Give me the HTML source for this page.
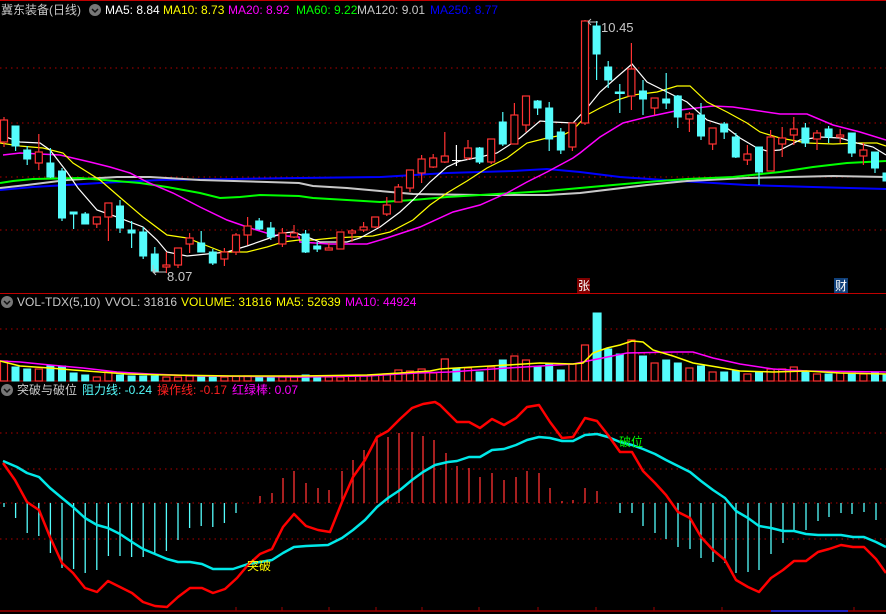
<!DOCTYPE html>
<html><head><meta charset="utf-8"><style>
html,body{margin:0;padding:0;background:#000;width:886px;height:614px;overflow:hidden}
.t{position:absolute;font-family:"Liberation Sans","Noto Sans CJK SC",sans-serif;font-size:12px;line-height:14px;white-space:nowrap}
svg{position:absolute;left:0;top:0}
.cr{fill:#000;stroke:#ff3232;stroke-width:1.2}
.cc{fill:#54fcfc;stroke:#54fcfc;stroke-width:1}
.wr{stroke:#ff3232;stroke-width:1.2}
.wc{stroke:#54fcfc;stroke-width:1.2}
.g{stroke:#b00000;stroke-width:1;stroke-dasharray:1.5 4}
</style></head><body>
<svg width="886" height="614" viewBox="0 0 886 614">
<line x1="0" y1="0.5" x2="886" y2="0.5" stroke="#c00000"/>
<g class="g"><line x1="0" y1="68" x2="886" y2="68"/><line x1="0" y1="123" x2="886" y2="123"/><line x1="0" y1="177" x2="886" y2="177"/><line x1="0" y1="230" x2="886" y2="230"/>
<line x1="0" y1="329" x2="886" y2="329"/><line x1="0" y1="354" x2="886" y2="354"/>
<line x1="0" y1="433" x2="886" y2="433"/><line x1="0" y1="469" x2="886" y2="469"/><line x1="0" y1="503" x2="886" y2="503"/><line x1="0" y1="539" x2="886" y2="539"/></g>
<line x1="0" y1="293.5" x2="886" y2="293.5" stroke="#c00000"/>
<line x1="0" y1="381" x2="886" y2="381" stroke="#c00000"/>
<line x1="0" y1="611" x2="886" y2="611" stroke="#a00000" stroke-width="1.5"/>
<line x1="771" y1="611" x2="848" y2="611" stroke="#2020c0" stroke-width="2"/>
<g stroke="#a00000"><line x1="236" y1="607" x2="236" y2="611"/><line x1="282" y1="607" x2="282" y2="611"/><line x1="329" y1="607" x2="329" y2="611"/><line x1="376" y1="607" x2="376" y2="611"/><line x1="422" y1="607" x2="422" y2="611"/><line x1="479" y1="607" x2="479" y2="611"/><line x1="538" y1="607" x2="538" y2="611"/><line x1="596" y1="607" x2="596" y2="611"/><line x1="654" y1="607" x2="654" y2="611"/><line x1="722" y1="607" x2="722" y2="611"/><line x1="854" y1="607" x2="854" y2="611"/></g>

<g fill="none" stroke-width="1.2">
<polyline stroke="#0000ff" stroke-width="2" points="0,190 33,187 67,185 100,183 160,180 233,179 299,178 380,177 447,173 513,171 547,169 580,172 620,177 680,181 747,185 813,187 886,189"/>
<polyline stroke="#c8c8c8" stroke-width="2" points="0,188 27,185 67,180 117,177 150,177 200,180 267,182 299,183 313,186 347,188 380,191 413,194 480,195 547,195 580,193 647,185 687,181 747,178 833,176 886,177"/>
<polyline stroke="#00ff00" stroke-width="2" points="0,183 13,181 33,179 80,178 140,183 167,187 200,193 220,198 240,197 260,195 299,196 313,198 347,200 380,202 413,200 447,197 497,194 547,191 580,188 613,185 647,182 687,179 733,177 780,172 813,167 847,163 886,161"/>
<polyline stroke="#ff00ff" stroke-width="1.5" points="3,155 20,153 60,155 90,162 110,167 130,173 147,182 173,193 200,207 227,220 250,228 273,235 299,237 300,242 330,244 367,244 387,238 420,227 453,212 480,205 507,193 527,182 547,172 573,158 580,153 600,137 623,123 647,117 680,110 713,106 733,107 753,110 780,114 807,114 833,125 860,132 886,140"/>
<polyline stroke="#ffff00" points="0,143 20,146 43,148 63,153 73,163 100,180 123,200 143,217 167,235 187,238 210,247 223,252 247,252 267,247 283,242 299,240 313,240 333,238 373,236 390,232 413,220 430,205 447,193 467,181 487,168 507,158 527,143 547,138 563,135 573,130 587,115 600,108 617,100 633,95 657,92 677,86 690,86 707,102 727,112 747,123 760,132 780,138 807,143 833,144 860,143 877,143 886,146"/>
<polyline stroke="#ffffff" points="0,135 20,142 40,143 50,150 67,172 78,188 97,210 117,217 143,227 157,240 167,252 187,256 207,254 227,252 247,246 267,239 283,233 293,232 307,237 320,242 347,242 360,238 380,227 400,212 413,200 430,182 447,167 460,161 480,157 497,153 520,138 540,121 553,122 573,123 587,108 600,92 617,77 632,64 647,82 667,92 687,102 707,120 723,125 740,138 757,148 767,151 780,150 800,140 820,137 840,138 857,143 873,147 886,155"/>
</g>

<g>
<line class="wr" x1="4" y1="117" x2="4" y2="147"/><rect class="cr" x="0.5" y="120" width="7" height="22"/>
<line class="wc" x1="15.6" y1="126" x2="15.6" y2="151"/><rect class="cc" x="12" y="126" width="7" height="20"/>
<line class="wc" x1="27.2" y1="146" x2="27.2" y2="165"/><rect class="cc" x="23.7" y="150" width="7" height="9"/>
<line class="wr" x1="38.8" y1="134" x2="38.8" y2="170"/><rect class="cr" x="35.3" y="152" width="7" height="11"/>
<line class="wc" x1="50.4" y1="148" x2="50.4" y2="178"/><rect class="cc" x="46.9" y="163" width="7" height="14"/>
<line class="wc" x1="62" y1="168" x2="62" y2="221"/><rect class="cc" x="58.5" y="171" width="7" height="47"/>
<line class="wc" x1="73.6" y1="212" x2="73.6" y2="229"/><rect class="cc" x="70.1" y="212" width="7" height="2"/>
<line class="wc" x1="85.2" y1="212" x2="85.2" y2="224"/><rect class="cc" x="81.7" y="214" width="7" height="10"/>
<line class="wr" x1="96.8" y1="217" x2="96.8" y2="228"/><rect class="cr" x="93.3" y="217" width="7" height="7"/>
<line class="wr" x1="108.4" y1="203" x2="108.4" y2="241"/><rect class="cr" x="104.9" y="203" width="7" height="14"/>
<line class="wc" x1="120" y1="200" x2="120" y2="233"/><rect class="cc" x="116.5" y="206" width="7" height="22"/>
<line class="wc" x1="131.6" y1="221" x2="131.6" y2="248"/><rect class="cc" x="128.1" y="230" width="7" height="3"/>
<line class="wc" x1="143.2" y1="227" x2="143.2" y2="259"/><rect class="cc" x="139.7" y="232" width="7" height="24"/>
<line class="wc" x1="154.8" y1="247" x2="154.8" y2="273"/><rect class="cc" x="151.3" y="254" width="7" height="17"/>
<line class="wr" x1="166.4" y1="252" x2="166.4" y2="273"/><rect class="cr" x="162.9" y="265" width="7" height="2"/>
<line class="wr" x1="178" y1="248" x2="178" y2="268"/><rect class="cr" x="174.5" y="248" width="7" height="17"/>
<line class="wr" x1="189.6" y1="233" x2="189.6" y2="253"/><rect class="cr" x="186.1" y="238" width="7" height="6"/>
<line class="wc" x1="201.2" y1="231" x2="201.2" y2="252"/><rect class="cc" x="197.7" y="243" width="7" height="9"/>
<line class="wc" x1="212.8" y1="249" x2="212.8" y2="265"/><rect class="cc" x="209.3" y="252" width="7" height="11"/>
<line class="wr" x1="224.4" y1="248" x2="224.4" y2="266"/><rect class="cr" x="220.9" y="252" width="7" height="7"/>
<line class="wr" x1="236" y1="233" x2="236" y2="255"/><rect class="cr" x="232.5" y="235" width="7" height="17"/>
<line class="wr" x1="247.6" y1="217" x2="247.6" y2="245"/><rect class="cr" x="244.1" y="226" width="7" height="9"/>
<line class="wc" x1="259.2" y1="218" x2="259.2" y2="230"/><rect class="cc" x="255.7" y="221" width="7" height="8"/>
<line class="wc" x1="270.8" y1="222" x2="270.8" y2="240"/><rect class="cc" x="267.3" y="228" width="7" height="9"/>
<line class="wr" x1="282.4" y1="228" x2="282.4" y2="247"/><rect class="cr" x="278.9" y="233" width="7" height="11"/>
<line class="wr" x1="294" y1="225" x2="294" y2="238"/><rect class="cr" x="290.5" y="233" width="7" height="4"/>
<line class="wc" x1="305.6" y1="230" x2="305.6" y2="253"/><rect class="cc" x="302.1" y="234" width="7" height="18"/>
<line class="wc" x1="317.2" y1="242" x2="317.2" y2="252"/><rect class="cc" x="313.7" y="246" width="7" height="3"/>
<line class="wr" x1="328.8" y1="243" x2="328.8" y2="250"/><rect class="cr" x="325.3" y="248" width="7" height="2"/>
<line class="wr" x1="340.4" y1="232" x2="340.4" y2="249"/><rect class="cr" x="336.9" y="232" width="7" height="17"/>
<line class="wr" x1="352" y1="229" x2="352" y2="242"/><rect class="cr" x="348.5" y="231" width="7" height="2"/>
<line class="wr" x1="363.6" y1="222" x2="363.6" y2="232"/><rect class="cr" x="360.1" y="227" width="7" height="3"/>
<line class="wr" x1="375.2" y1="217" x2="375.2" y2="228"/><rect class="cr" x="371.7" y="217" width="7" height="10"/>
<line class="wr" x1="386.8" y1="197" x2="386.8" y2="216"/><rect class="cr" x="383.3" y="205" width="7" height="9"/>
<line class="wr" x1="398.4" y1="184" x2="398.4" y2="202"/><rect class="cr" x="394.9" y="187" width="7" height="15"/>
<line class="wr" x1="410" y1="170" x2="410" y2="192"/><rect class="cr" x="406.5" y="170" width="7" height="18"/>
<line class="wr" x1="421.6" y1="155" x2="421.6" y2="183"/><rect class="cr" x="418.1" y="159" width="7" height="14"/>
<line class="wr" x1="433.2" y1="154" x2="433.2" y2="168"/><rect class="cr" x="429.7" y="158" width="7" height="9"/>
<line class="wr" x1="444.8" y1="132" x2="444.8" y2="163"/><rect class="cr" x="441.3" y="156" width="7" height="6"/>
<line stroke="#fff" stroke-width="1.2" x1="456.4" y1="145" x2="456.4" y2="166"/><line stroke="#fff" x1="452" y1="160.5" x2="461" y2="160.5"/>
<line class="wr" x1="468" y1="140" x2="468" y2="160"/><rect class="cr" x="464.5" y="148" width="7" height="10"/>
<line class="wc" x1="479.6" y1="147" x2="479.6" y2="164"/><rect class="cc" x="476.1" y="148" width="7" height="14"/>
<line class="wr" x1="491.2" y1="139" x2="491.2" y2="164"/><rect class="cr" x="487.7" y="139" width="7" height="23"/>
<line class="wc" x1="502.8" y1="112" x2="502.8" y2="146"/><rect class="cc" x="499.3" y="122" width="7" height="22"/>
<line class="wr" x1="514.4" y1="103" x2="514.4" y2="144"/><rect class="cr" x="510.9" y="115" width="7" height="29"/>
<line class="wr" x1="526" y1="96" x2="526" y2="132"/><rect class="cr" x="522.5" y="96" width="7" height="29"/>
<line class="wc" x1="537.6" y1="100" x2="537.6" y2="115"/><rect class="cc" x="534.1" y="101" width="7" height="7"/>
<line class="wc" x1="549.2" y1="102" x2="549.2" y2="151"/><rect class="cc" x="545.7" y="108" width="7" height="31"/>
<line class="wc" x1="560.8" y1="128" x2="560.8" y2="154"/><rect class="cc" x="557.3" y="132" width="7" height="18"/>
<line class="wr" x1="572.4" y1="123" x2="572.4" y2="151"/><rect class="cr" x="568.9" y="123" width="7" height="24"/>
<line class="wr" x1="585" y1="20" x2="585" y2="125"/><rect class="cr" x="581.5" y="21" width="7" height="102"/>
<line class="wc" x1="596.6" y1="21" x2="596.6" y2="80"/><rect class="cc" x="593.1" y="26" width="7" height="28"/>
<line class="wc" x1="608.2" y1="61" x2="608.2" y2="88"/><rect class="cc" x="604.7" y="67" width="7" height="13"/>
<line class="wc" x1="619.8" y1="84" x2="619.8" y2="113"/><rect class="cc" x="615.3" y="92" width="9" height="1.5"/>
<line class="wr" x1="631.4" y1="43" x2="631.4" y2="110"/><rect class="cr" x="627.9" y="69" width="7" height="27"/>
<line class="wc" x1="643" y1="80" x2="643" y2="115"/><rect class="cc" x="639.5" y="91" width="7" height="8"/>
<line class="wr" x1="654.6" y1="98" x2="654.6" y2="115"/><rect class="cr" x="651.1" y="98" width="7" height="10"/>
<line class="wc" x1="666.2" y1="73" x2="666.2" y2="109"/><rect class="cc" x="662.7" y="99" width="7" height="4"/>
<line class="wc" x1="677.8" y1="95" x2="677.8" y2="128"/><rect class="cc" x="674.3" y="96" width="7" height="21"/>
<line class="wr" x1="689.4" y1="112" x2="689.4" y2="132"/><rect class="cr" x="685.9" y="114" width="7" height="5"/>
<line class="wc" x1="701" y1="103" x2="701" y2="140"/><rect class="cc" x="697.5" y="115" width="7" height="21"/>
<line class="wr" x1="712.6" y1="128" x2="712.6" y2="150"/><rect class="cr" x="709.1" y="128" width="7" height="16"/>
<line class="wc" x1="724.2" y1="122" x2="724.2" y2="139"/><rect class="cc" x="720.7" y="124" width="7" height="8"/>
<line class="wc" x1="735.8" y1="133" x2="735.8" y2="158"/><rect class="cc" x="732.3" y="137" width="7" height="20"/>
<line class="wr" x1="747.4" y1="145" x2="747.4" y2="165"/><rect class="cr" x="743.9" y="154" width="7" height="6"/>
<line class="wc" x1="759" y1="147" x2="759" y2="185"/><rect class="cc" x="755.5" y="147" width="7" height="25"/>
<line class="wr" x1="770.6" y1="130" x2="770.6" y2="171"/><rect class="cr" x="767.1" y="137" width="7" height="34"/>
<line class="wr" x1="782.2" y1="127" x2="782.2" y2="157"/><rect class="cr" x="778.7" y="138" width="7" height="6"/>
<line class="wr" x1="793.8" y1="117" x2="793.8" y2="145"/><rect class="cr" x="790.3" y="129" width="7" height="6"/>
<line class="wc" x1="805.4" y1="123" x2="805.4" y2="147"/><rect class="cc" x="801.9" y="128" width="7" height="15"/>
<line class="wr" x1="817" y1="130" x2="817" y2="150"/><rect class="cr" x="813.5" y="133" width="7" height="6"/>
<line class="wc" x1="828.6" y1="126" x2="828.6" y2="143"/><rect class="cc" x="825.1" y="129" width="7" height="8"/>
<line class="wr" x1="840.2" y1="129" x2="840.2" y2="143"/><rect class="cr" x="836.7" y="135" width="7" height="2"/>
<line class="wc" x1="851.8" y1="133" x2="851.8" y2="157"/><rect class="cc" x="848.3" y="133" width="7" height="20"/>
<line class="wr" x1="863.4" y1="143" x2="863.4" y2="165"/><rect class="cr" x="859.9" y="150" width="7" height="6"/>
<line class="wc" x1="875" y1="152" x2="875" y2="173"/><rect class="cc" x="871.5" y="152" width="7" height="16"/>
<rect class="cc" x="883" y="173" width="7" height="8"/>
</g>
<g stroke="#c0c0c0" fill="none"><path d="M588,22 L598,22 M588,22 L591,19 M588,22 L591,25"/><path d="M153,265 L153,272 L166,272 M153,272 L156,269 M153,272 L156,275"/></g>
<text x="601" y="32" fill="#c8c8c8" font-family="Liberation Sans" font-size="13">10.45</text>
<text x="167" y="281" fill="#c8c8c8" font-family="Liberation Sans" font-size="13">8.07</text>
<rect x="577" y="278" width="13" height="15" fill="#800000"/>
<text x="578" y="290" fill="#ffffff" font-family="Noto Sans CJK SC" font-size="12">张</text>
<rect x="834" y="278" width="14" height="15" fill="#10407a"/>
<text x="835" y="290" fill="#ffffff" font-family="Noto Sans CJK SC" font-size="12">财</text>

<g>
<rect class="cr" x="0.5" y="361" width="7" height="20"/><rect class="cc" x="12" y="367" width="7" height="14"/><rect class="cc" x="23.7" y="369" width="7" height="12"/><rect class="cr" x="35.3" y="369" width="7" height="12"/><rect class="cc" x="46.9" y="366" width="7" height="15"/><rect class="cc" x="58.5" y="366" width="7" height="15"/><rect class="cc" x="70.1" y="373" width="7" height="8"/><rect class="cc" x="81.7" y="375" width="7" height="6"/><rect class="cr" x="93.3" y="377" width="7" height="4"/><rect class="cr" x="104.9" y="372" width="7" height="9"/><rect class="cc" x="116.5" y="375" width="7" height="6"/><rect class="cc" x="128.1" y="376" width="7" height="5"/><rect class="cc" x="139.7" y="376" width="7" height="5"/><rect class="cc" x="151.3" y="376" width="7" height="5"/><rect class="cr" x="162.9" y="377" width="7" height="4"/><rect class="cr" x="174.5" y="377" width="7" height="4"/><rect class="cr" x="186.1" y="376" width="7" height="5"/><rect class="cc" x="197.7" y="377" width="7" height="4"/><rect class="cc" x="209.3" y="377" width="7" height="4"/><rect class="cr" x="220.9" y="377" width="7" height="4"/><rect class="cr" x="232.5" y="376" width="7" height="5"/><rect class="cr" x="244.1" y="376" width="7" height="5"/><rect class="cc" x="255.7" y="377" width="7" height="4"/><rect class="cc" x="267.3" y="377" width="7" height="4"/><rect class="cr" x="278.9" y="377" width="7" height="4"/><rect class="cr" x="290.5" y="377" width="7" height="4"/><rect class="cc" x="302.1" y="375" width="7" height="6"/><rect class="cc" x="313.7" y="377" width="7" height="4"/><rect class="cr" x="325.3" y="377" width="7" height="4"/><rect class="cr" x="336.9" y="377" width="7" height="4"/><rect class="cr" x="348.5" y="376" width="7" height="5"/><rect class="cr" x="360.1" y="376" width="7" height="5"/><rect class="cr" x="371.7" y="375" width="7" height="6"/><rect class="cr" x="383.3" y="374" width="7" height="7"/><rect class="cr" x="394.9" y="370" width="7" height="11"/><rect class="cr" x="406.5" y="371" width="7" height="10"/><rect class="cr" x="418.1" y="369" width="7" height="12"/><rect class="cr" x="429.7" y="373" width="7" height="8"/><rect class="cr" x="441.3" y="359" width="7" height="22"/><rect class="cc" x="452.9" y="368" width="7" height="13"/><rect class="cr" x="464.5" y="368" width="7" height="13"/><rect class="cc" x="476.1" y="372" width="7" height="9"/><rect class="cr" x="487.7" y="367" width="7" height="14"/><rect class="cc" x="499.3" y="360" width="7" height="21"/><rect class="cr" x="510.9" y="356" width="7" height="25"/><rect class="cr" x="522.5" y="360" width="7" height="21"/><rect class="cc" x="534.1" y="367" width="7" height="14"/><rect class="cc" x="545.7" y="364" width="7" height="17"/><rect class="cc" x="557.3" y="370" width="7" height="11"/><rect class="cr" x="568.9" y="364" width="7" height="17"/><rect class="cr" x="581.5" y="345" width="7" height="36"/><rect class="cc" x="593.1" y="313" width="8" height="68"/><rect class="cc" x="604.7" y="349" width="7" height="32"/><rect class="cc" x="616.3" y="354" width="7" height="27"/><rect class="cr" x="627.9" y="340" width="7" height="41"/><rect class="cc" x="639.5" y="356" width="7" height="25"/><rect class="cr" x="651.1" y="363" width="7" height="18"/><rect class="cc" x="662.7" y="360" width="7" height="21"/><rect class="cc" x="674.3" y="363" width="7" height="18"/><rect class="cr" x="685.9" y="368" width="7" height="13"/><rect class="cc" x="697.5" y="366" width="7" height="15"/><rect class="cr" x="709.1" y="372" width="7" height="9"/><rect class="cc" x="720.7" y="372" width="7" height="9"/><rect class="cc" x="732.3" y="371" width="7" height="10"/><rect class="cr" x="743.9" y="374" width="7" height="7"/><rect class="cc" x="755.5" y="372" width="7" height="9"/><rect class="cr" x="767.1" y="369" width="7" height="12"/><rect class="cr" x="778.7" y="369" width="7" height="12"/><rect class="cr" x="790.3" y="367" width="7" height="14"/><rect class="cc" x="801.9" y="372" width="7" height="9"/><rect class="cr" x="813.5" y="374" width="7" height="7"/><rect class="cc" x="825.1" y="374" width="7" height="7"/><rect class="cr" x="836.7" y="373" width="7" height="8"/><rect class="cc" x="848.3" y="373" width="7" height="8"/><rect class="cr" x="859.9" y="374" width="7" height="7"/><rect class="cc" x="871.5" y="373" width="7" height="8"/><rect class="cc" x="883" y="374" width="7" height="7"/>
</g>
<g fill="none" stroke-width="1.5">
<polyline stroke="#ff00ff" points="0,361 20,362 50,365 83,368 117,372 150,374 200,376 300,377 367,376 417,373 450,372 507,368 573,364 627,353 673,352 693,352 713,358 740,364 773,369 807,371 886,372"/>
<polyline stroke="#ffff00" points="0,361 20,366 50,368 73,370 100,372 127,374 167,375 233,376 300,376 367,375 400,373 430,371 440,369 473,367 507,365 540,363 573,364 583,363 593,353 607,348 620,345 632,341 643,342 653,350 673,356 693,363 717,367 740,371 773,372 807,371 840,373 886,374"/>
</g>

<g stroke="#54fcfc" stroke-width="1.3">
<line x1="4" y1="503" x2="4" y2="507"/><line x1="15.6" y1="503" x2="15.6" y2="518"/><line x1="27.2" y1="503" x2="27.2" y2="533"/><line x1="38.8" y1="503" x2="38.8" y2="536"/><line x1="50.4" y1="503" x2="50.4" y2="553"/><line x1="62" y1="503" x2="62" y2="568"/><line x1="73.6" y1="503" x2="73.6" y2="569"/><line x1="85.2" y1="503" x2="85.2" y2="573"/><line x1="96.8" y1="503" x2="96.8" y2="570"/><line x1="108.4" y1="503" x2="108.4" y2="556"/><line x1="120" y1="503" x2="120" y2="556"/><line x1="131.6" y1="503" x2="131.6" y2="557"/><line x1="143.2" y1="503" x2="143.2" y2="557"/><line x1="154.8" y1="503" x2="154.8" y2="553"/><line x1="166.4" y1="503" x2="166.4" y2="551"/><line x1="178" y1="503" x2="178" y2="540"/><line x1="189.6" y1="503" x2="189.6" y2="528"/><line x1="201.2" y1="503" x2="201.2" y2="526"/><line x1="212.8" y1="503" x2="212.8" y2="527"/><line x1="224.4" y1="503" x2="224.4" y2="523"/><line x1="236" y1="503" x2="236" y2="513"/>
<line x1="620" y1="503" x2="620" y2="513"/><line x1="632" y1="503" x2="632" y2="513"/><line x1="643" y1="503" x2="643" y2="526"/><line x1="655" y1="503" x2="655" y2="533"/><line x1="666" y1="503" x2="666" y2="539"/><line x1="678" y1="503" x2="678" y2="547"/><line x1="690" y1="503" x2="690" y2="549"/><line x1="701" y1="503" x2="701" y2="558"/><line x1="713" y1="503" x2="713" y2="562"/><line x1="725" y1="503" x2="725" y2="563"/><line x1="736" y1="503" x2="736" y2="573"/><line x1="748" y1="503" x2="748" y2="572"/><line x1="759" y1="503" x2="759" y2="570"/><line x1="771" y1="503" x2="771" y2="554"/><line x1="783" y1="503" x2="783" y2="543"/><line x1="794" y1="503" x2="794" y2="530"/><line x1="806" y1="503" x2="806" y2="530"/><line x1="818" y1="503" x2="818" y2="521"/><line x1="829" y1="503" x2="829" y2="517"/><line x1="841" y1="503" x2="841" y2="513"/><line x1="852" y1="503" x2="852" y2="514"/><line x1="864" y1="503" x2="864" y2="512"/><line x1="876" y1="503" x2="876" y2="520"/>
</g>
<g stroke="#ff3232" stroke-width="1.3">
<line x1="260" y1="503" x2="260" y2="496"/><line x1="272" y1="503" x2="272" y2="493"/><line x1="283" y1="503" x2="283" y2="478"/><line x1="294" y1="503" x2="294" y2="471"/><line x1="306" y1="503" x2="306" y2="483"/><line x1="318" y1="503" x2="318" y2="488"/><line x1="329" y1="503" x2="329" y2="490"/><line x1="342" y1="503" x2="342" y2="471"/><line x1="353" y1="503" x2="353" y2="460"/><line x1="364" y1="503" x2="364" y2="450"/><line x1="377" y1="503" x2="377" y2="437"/><line x1="388" y1="503" x2="388" y2="437"/><line x1="399" y1="503" x2="399" y2="433"/><line x1="412" y1="503" x2="412" y2="432"/><line x1="423" y1="503" x2="423" y2="436"/><line x1="434" y1="503" x2="434" y2="440"/><line x1="446" y1="503" x2="446" y2="453"/><line x1="457" y1="503" x2="457" y2="466"/><line x1="469" y1="503" x2="469" y2="468"/><line x1="480" y1="503" x2="480" y2="477"/><line x1="492" y1="503" x2="492" y2="473"/><line x1="504" y1="503" x2="504" y2="480"/><line x1="516" y1="503" x2="516" y2="477"/><line x1="527" y1="503" x2="527" y2="471"/><line x1="539" y1="503" x2="539" y2="473"/><line x1="550" y1="503" x2="550" y2="488"/><line x1="562" y1="503" x2="562" y2="501"/><line x1="573" y1="503" x2="573" y2="500"/><line x1="585" y1="503" x2="585" y2="488"/><line x1="597" y1="503" x2="597" y2="491"/>
</g>
<g fill="none" stroke-width="2.5" stroke-linejoin="round">
<polyline stroke="#00e8e8" points="3,461 17,467 27,473 39,477 50,488 62,498 73,507 85,518 97,525 108,528 120,534 132,542 143,549 155,554 167,559 178,562 190,562 202,564 213,569 233,569 248,564 260,562 272,560 283,553 294,547 306,546 328,545 342,538 353,530 365,520 377,507 388,498 400,490 412,480 423,472 435,465 448,462 457,461 469,457 480,457 492,450 504,449 516,445 527,440 539,437 550,438 562,441 573,441 585,435 597,434 608,437 620,442 632,445 643,449 655,454 666,460 678,466 690,472 701,481 713,490 725,498 736,511 748,518 759,526 771,528 783,531 794,531 806,534 818,535 841,535 853,537 864,537 876,542 886,547"/>
<polyline stroke="#ff0000" points="3,463 15,480 27,502 39,510 50,537 62,563 73,573 85,588 97,592 108,581 120,587 132,593 143,602 155,606 167,607 178,597 190,588 202,588 213,593 225,589 237,578 248,565 260,554 272,549 283,527 294,514 306,526 318,530 330,532 342,502 353,477 365,460 377,437 388,431 400,419 412,408 423,404 435,402 440,405 457,422 469,422 480,428 492,419 504,425 516,418 527,407 539,405 550,422 562,438 573,437 585,418 597,421 608,435 620,452 632,452 643,471 655,483 666,495 678,512 690,518 701,537 713,550 725,560 736,580 748,587 759,592 771,578 783,570 794,561 806,561 818,552 829,549 841,545 853,547 864,547 876,559 886,573"/>
</g>
<text x="247" y="570" fill="#ffff00" font-family="Noto Sans CJK SC" font-size="12">突破</text>
<text x="619" y="446" fill="#00ff00" font-family="Noto Sans CJK SC" font-size="12">破位</text>

<g><circle cx="95" cy="10" r="6" fill="#777"/><path d="M92,9 L95,12 L98,9" stroke="#111" stroke-width="1.5" fill="none"/>
<circle cx="7" cy="302" r="6" fill="#777"/><path d="M4,301 L7,304 L10,301" stroke="#111" stroke-width="1.5" fill="none"/>
<circle cx="7" cy="390" r="6" fill="#777"/><path d="M4,389 L7,392 L10,389" stroke="#111" stroke-width="1.5" fill="none"/></g>
</svg>

<div class="t" style="left:1px;top:3px;color:#c8c8c8">冀东装备(日线)</div>
<div class="t" style="left:105px;top:3px;color:#ffffff">MA5: 8.84</div>
<div class="t" style="left:163px;top:3px;color:#ffff00">MA10: 8.73</div>
<div class="t" style="left:228px;top:3px;color:#ff00ff">MA20: 8.92</div>
<div class="t" style="left:296px;top:3px;color:#00ff00">MA60: 9.22</div>
<div class="t" style="left:357px;top:3px;color:#c8c8c8">MA120: 9.01</div>
<div class="t" style="left:430px;top:3px;color:#0000ff">MA250: 8.77</div>

<div class="t" style="left:17px;top:295px;color:#c8c8c8">VOL-TDX(5,10)</div>
<div class="t" style="left:105px;top:295px;color:#c8c8c8">VVOL: 31816</div>
<div class="t" style="left:181px;top:295px;color:#ffff00">VOLUME: 31816</div>
<div class="t" style="left:276px;top:295px;color:#ffff00">MA5: 52639</div>
<div class="t" style="left:345px;top:295px;color:#ff00ff">MA10: 44924</div>

<div class="t" style="left:17px;top:383px;color:#c8c8c8">突破与破位</div>
<div class="t" style="left:82px;top:383px;color:#54fcfc">阻力线: -0.24</div>
<div class="t" style="left:157px;top:383px;color:#ff2020">操作线: -0.17</div>
<div class="t" style="left:232px;top:383px;color:#ff00ff">红绿棒: 0.07</div>
</body></html>
